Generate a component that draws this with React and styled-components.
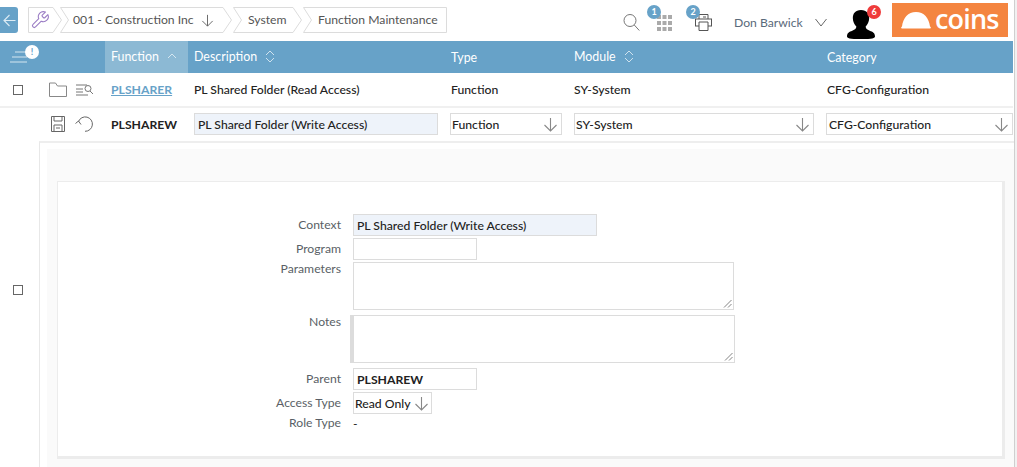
import React from "react";
import styled, { createGlobalStyle } from "styled-components";

const Global = createGlobalStyle`
  html, body { margin: 0; padding: 0; background: #fff; overflow: hidden; }
  body { font-family: Lato, "Liberation Sans", sans-serif; font-size: 12.2px; color: #222; }
  * { box-sizing: border-box; }
`;

const Shell = styled.div`width: 1017px; height: 467px; overflow: hidden; display: flex;`;
const Page = styled.div`width: 1014px; height: 467px; display: flex; flex-direction: column; flex: none;`;
const ScrollStrip = styled.div`flex: 1; background: #f1f1f1; border-left: 1px solid #cfcfcf;`;

const TopBar = styled.header`height: 41px; display: flex; align-items: flex-start; padding: 7px 6px 0 0; flex: none;`;
const BackButton = styled.button`
  width: 18px; height: 26px; border: 0; padding: 0; background: #67a2c8; border-radius: 0 3px 3px 0; flex: none;
  display: flex; align-items: center; justify-content: center;
`;
const Crumbs = styled.nav`display: flex; margin: 0 0 0 10px; height: 26px;`;
const Crumb = styled.div`
  position: relative; height: 26px; width: ${p => p.$w}px; margin-left: ${p => p.$ml ?? 0}px;
  display: flex; align-items: center; padding-left: ${p => p.$pad}px; color: #555; white-space: nowrap;
  gap: ${p => p.$gap ?? 0}px;
  & > svg.bg { position: absolute; inset: 0; }
  & > span, & > svg.ic { position: relative; }
`;
const CrumbText = styled.span`padding-bottom: 1px;`;
const Right = styled.div`margin-left: auto; display: flex; align-items: flex-start; height: 34px; margin-top: -4px;`;
const IconSlot = styled.div`position: relative; width: ${p => p.$w}px; height: 34px; flex: none;`;
const Count = styled.span`
  position: absolute; left: ${p => p.$l}px; top: ${p => p.$t}px; width: ${p => p.$s || 14}px; height: ${p => p.$s || 14}px; border-radius: 50%;
  background: ${p => p.$c || "#67a2c8"}; color: ${p => p.$fg || "#fff"}; font-size: 9px; font-weight: 700; line-height: ${p => p.$s || 14}px; text-align: center;
`;
const SlotIcon = styled.svg`position: absolute; left: ${p => p.$l}px; top: ${p => p.$t}px;`;
const User = styled.div`width: 113px; height: 34px; display: flex; align-items: center; gap: 12px; color: #5a6a7a; padding-top: 4px; flex: none;`;
const Logo = styled.div`
  width: 116px; height: 34px; background: #f48540; color: #fff; display: flex; align-items: center; padding-left: 9px; flex: none;
`;
const LogoText = styled.span`font-family: "Open Sans", Lato, sans-serif; font-size: 27px; font-weight: 600; line-height: 28px; margin-left: 4px; letter-spacing: -0.8px; padding-bottom: 3px;`;

const Grid = styled.div`
  display: grid; width: 1013px; flex: none;
  grid-template-columns: 39px 66px 83px 257px 123px 253px 192px;
`;
const HeadRow = styled(Grid)`height: 32px; background: #67a2c8; color: #fff; align-items: stretch;`;
const HeadCell = styled.div`
  display: flex; align-items: center; gap: 8px; padding-left: ${p => p.$pad ?? 6}px; padding-bottom: ${p => p.$sort ? 2 : 0}px;
  background: ${p => p.$active ? "#8cb9d4" : "transparent"}; position: relative; font-size: 12.4px;
`;
const Row = styled(Grid)`
  height: ${p => p.$h}px; border-bottom: ${p => p.$line ? "2px solid #f0f0f0" : "0"}; align-items: center;
  padding-bottom: ${p => p.$pb ?? 0}px;
`;
const Cell = styled.div`
  display: flex; align-items: center; padding-left: ${p => p.$pad ?? 6}px; gap: ${p => p.$gap ?? 0}px; color: #222; white-space: nowrap; min-width: 0;
  font-weight: ${p => p.$b ? 700 : 500};
`;
const CheckBox = styled.span`
  display: block; width: 10px; height: 10px; border: 1px solid #666; background: #fff; flex: none;
`;
const CheckCell = styled.div`display: flex; justify-content: flex-start; padding-left: 13px;`;
const FnLink = styled.a`color: #67a2c8; text-decoration: underline; font-weight: 700;`;
const Input = styled.div`
  display: flex; align-items: center; justify-content: space-between; height: 22px; width: ${p => p.$w}px; border: 1px solid #dcdcdc;
  background: ${p => p.$fill ? "#eef3fa" : "#fff"}; padding: 0 ${p => p.$pr ?? 3}px 0 ${p => p.$pl ?? 3}px; color: #222;
  font-weight: ${p => p.$b ? 700 : 500}; white-space: nowrap; flex: none;
`;

const Detail = styled.div`display: flex; flex: 1; min-height: 0; width: 1014px;`;
const DetailCheck = styled.div`width: 39px; display: flex; align-items: center; padding: 0 0 28px 13px; flex: none;`;
const Outer = styled.section`
  flex: 1; border-left: 1px solid #e8e8e8; border-top: 2px solid #eeeeee; padding: 6px 0 0 7px; display: flex;
`;
const Tint = styled.div`flex: 1; background: #fafafa; padding: 32px 9px 0 10px; display: flex;`;
const Card = styled.div`
  flex: 1; height: 278px; background: #fff; border: 1px solid #ececec; border-bottom-width: 3px; border-right-width: 3px;
  padding: 32px 0 0 0; display: flex; flex-direction: column;
`;
const Field = styled.div`display: flex; align-items: ${p => p.$top ? "flex-start" : "center"}; margin-bottom: ${p => p.$mb ?? 2}px; min-height: ${p => p.$h}px;`;
const Label = styled.label`
  width: ${p => p.$w ?? 295}px; text-align: right; color: #5a5f66; flex: none; padding-right: ${p => p.$pr ?? 12}px; line-height: 16px;
  margin-top: ${p => p.$mt ?? 0}px;
`;
const TextBox = styled.div`
  position: relative; width: ${p => p.$w}px; height: ${p => p.$h}px; border: 1px solid #dcdcdc; background: #fff;
  border-left-width: ${p => p.$thick ? 4 : 1}px;
`;
const Grip = styled.svg`position: absolute; right: 1px; bottom: 1px;`;

const Arrow = ({ c = "#888", size = 15 }) => (
  <svg className="ic" width={size} height={size} viewBox="0 0 15 15" fill="none" stroke={c} strokeWidth="1.1"><path d="M7.5 1v13M1.5 8l6 6 6-6" /></svg>
);
const UpDown = () => (
  <svg width="10" height="13" viewBox="0 0 10 13" fill="none" stroke="#cfe2ee" strokeWidth="1"><path d="M1 5l4-4 4 4M1 8l4 4 4-4" /></svg>
);
const CrumbBg = ({ w, first }) => (
  <svg className="bg" width={w} height="26" viewBox={`0 0 ${w} 26`} fill="#fff" stroke="#dcdcdc">
    {first ? <path d={`M.5.5H${w - 9}L${w - .5} 13 ${w - 9} 25.500H.5Z`} /> : <path d={`M.5.5H${w - 9}L${w - .5} 13 ${w - 9} 25.500H.5L8.500 13Z`} />}
  </svg>
);
const GripIcon = () => (
  <Grip width="9" height="9" viewBox="0 0 9 9" stroke="#666" strokeWidth="0.8"><path d="M1 8.500L8.500 1M5 8.500L8.500 5" /></Grip>
);

export default function App() {
  return (
    <Shell>
      <Global />
      <Page>
        <TopBar>
          <BackButton aria-label="Back">
            <svg width="13" height="13" viewBox="0 0 13 13" fill="none" stroke="#dcebf4" strokeWidth="1.1"><path d="M12.500 6.500H1M6.500 1L1 6.500 6.500 12" /></svg>
          </BackButton>
          <Crumbs>
            <Crumb $w={34} $pad={2}>
              <CrumbBg w={34} first />
              <svg className="ic" width="20" height="20" viewBox="0 0 24 24" fill="none" stroke="#9a7cc4" strokeWidth="1.3" strokeLinejoin="round"><path d="M14.700 6.300a1 1 0 0 0 0 1.400l1.600 1.600a1 1 0 0 0 1.400 0l3.770-3.770a6 6 0 0 1-7.940 7.940l-6.910 6.910a2.120 2.120 0 0 1-3-3l6.910-6.910a6 6 0 0 1 7.940-7.940l-3.760 3.760z" /></svg>
            </Crumb>
            <Crumb $w={172} $pad={13} $ml={-2} $gap={7}>
              <CrumbBg w={172} />
              <CrumbText>001 - Construction Inc</CrumbText><Arrow c="#666" size={13} />
            </Crumb>
            <Crumb $w={69} $pad={15} $ml={1}>
              <CrumbBg w={69} />
              <CrumbText>System</CrumbText>
            </Crumb>
            <Crumb $w={144} $pad={15} $ml={1}>
              <svg className="bg" width="144" height="26" viewBox="0 0 144 26" fill="#fff" stroke="#dcdcdc"><path d="M.5.5H143.500V25.500H.5L8.500 13Z" /></svg>
              <CrumbText>Function Maintenance</CrumbText>
            </Crumb>
          </Crumbs>
          <Right>
            <IconSlot $w={24}>
              <SlotIcon $l={0} $t={10} width="17" height="18" viewBox="0 0 17 18" fill="none" stroke="#777" strokeWidth="1"><circle cx="7" cy="7.500" r="6" /><path d="M11.300 12l5 5.500" /></SlotIcon>
            </IconSlot>
            <IconSlot $w={39}>
              <SlotIcon $l={10} $t={11} width="15" height="17" viewBox="0 0 15 17" fill="#aaa">
                {[0, 6, 12].flatMap(y => [0, 5.500, 11].map(x => <rect key={`${x}-${y}`} x={x} y={y + 1} width="4" height="4" />))}
              </SlotIcon>
              <Count $l={0} $t={2} $s={14}>1</Count>
            </IconSlot>
            <IconSlot $w={48}>
              <SlotIcon $l={9} $t={10} width="17" height="19" viewBox="0 0 17 19" fill="#fff" stroke="#555" strokeWidth="1"><path d="M4 6V1.500h9V6" /><rect x=".5" y="6" width="16" height="7" fill="none" /><path d="M4 9h9v8.500H4z" /><path d="M8 4h3" /></SlotIcon>
              <Count $l={0} $t={2} $s={14}>2</Count>
            </IconSlot>
            <User>
              <span>Don Barwick</span>
              <svg width="12" height="9" viewBox="0 0 12 9" fill="none" stroke="#666" strokeWidth="1"><path d="M.5 1L6 8l5.500-7" /></svg>
            </User>
            <IconSlot $w={45}>
              <SlotIcon $l={0} $t={7} width="28" height="29" viewBox="0 0 24 28" fill="#000" preserveAspectRatio="none"><path d="M12 0c5 0 7 3.500 7 8 0 3.500-1.500 6-3 8 0 2 1 3 3.500 4 2.500 1 4.500 2 4.500 5.500 0 1.500-2 2.500-12 2.500S0 27 0 25.500C0 22 2 21 4.500 20 7 19 8 18 8 16c-1.500-2-3-4.500-3-8 0-4.500 2-8 7-8z" /></SlotIcon>
              <Count $l={20} $t={2} $s={14} $c="#ef3b3b">6</Count>
            </IconSlot>
            <Logo>
              <svg width="30" height="18" viewBox="0 0 30 18" fill="#fff"><path d="M1 17.500c-1.300 0-1-1.500 0-2C2 7 7 1 15 1s13 6 14 14.500c1 .5 1.300 2 0 2z" /></svg>
              <LogoText>coins</LogoText>
            </Logo>
          </Right>
        </TopBar>

        <HeadRow>
          <HeadCell $pad={10} style={{ gridColumn: "1 / span 2" }}>
            <svg width="17" height="12" viewBox="0 0 17 12" stroke="#d5e6f0" strokeWidth="1"><path d="M5 1h12M2 6h15M0 11h17" /></svg>
            <Count $l={25} $t={4} $s={14} $c="#fff" $fg="#67a2c8">!</Count>
          </HeadCell>
          <HeadCell $active $sort>Function
            <svg width="10" height="6" viewBox="0 0 10 6" fill="none" stroke="#d5e6f0" strokeWidth="1"><path d="M1 5l4-4 4 4" /></svg>
          </HeadCell>
          <HeadCell $sort>Description<UpDown /></HeadCell>
          <HeadCell>Type</HeadCell>
          <HeadCell $sort>Module<UpDown /></HeadCell>
          <HeadCell>Category</HeadCell>
        </HeadRow>

        <Row $h={35} $line>
          <CheckCell><CheckBox /></CheckCell>
          <Cell $pad={10} $gap={9}>
            <svg width="18" height="15" viewBox="0 0 18 15" fill="none" stroke="#888" strokeWidth="1"><path d="M.5 14.500V1h6l2 3h9v10.500z" /></svg>
            <svg width="18" height="12" viewBox="0 0 18 12" fill="none" stroke="#777" strokeWidth="1"><path d="M0 1h11M0 5h7M0 8h7M0 11h12" /><circle cx="12" cy="4.500" r="3" /><path d="M14 7l3 3" /></svg>
          </Cell>
          <Cell><FnLink>PLSHARER</FnLink></Cell>
          <Cell>PL Shared Folder (Read Access)</Cell>
          <Cell>Function</Cell>
          <Cell>SY-System</Cell>
          <Cell>CFG-Configuration</Cell>
        </Row>

        <Row $h={33} $pb={1}>
          <span />
          <Cell $pad={12} $gap={10}>
            <svg width="14" height="16" viewBox="0 0 14 16" fill="none" stroke="#666" strokeWidth="1"><path d="M.5.5h13v15H.5z" /><path d="M3 .5v4.500h8V.5M3 15.500V9h8v6.500M5 12h4" /></svg>
            <svg width="20" height="16" viewBox="0 0 20 16" fill="none" stroke="#666" strokeWidth="1"><path d="M3.500 5.500A7.200 7.200 0 1 1 10 15.300" /><path d="M.5 7.500l3-2.500 2.500 3.500" /></svg>
          </Cell>
          <Cell $b>PLSHAREW</Cell>
          <Cell><Input $w={244} $fill>PL Shared Folder (Write Access)</Input></Cell>
          <Cell $pad={5}><Input $w={112} $pl={1}>Function<Arrow /></Input></Cell>
          <Cell $pad={6}><Input $w={240} $pl={1}>SY-System<Arrow /></Input></Cell>
          <Cell $pad={5}><Input $w={187} $pl={2}>CFG-Configuration<Arrow /></Input></Cell>
        </Row>

        <Detail>
          <DetailCheck><CheckBox /></DetailCheck>
          <Outer>
            <Tint>
              <Card>
                <Field $h={22}><Label>Context</Label><Input $w={244} $fill>PL Shared Folder (Write Access)</Input></Field>
                <Field $h={22}><Label>Program</Label><TextBox $w={124} $h={22} /></Field>
                <Field $top $h={48} $mb={5}><Label $mt={-1}>Parameters</Label><TextBox $w={381} $h={48}><GripIcon /></TextBox></Field>
                <Field $top $h={48} $mb={5}><Label $w={292} $pr={9} $mt={-1}>Notes</Label><TextBox $w={385} $h={48} $thick><GripIcon /></TextBox></Field>
                <Field $h={22}><Label>Parent</Label><Input $w={124} $b>PLSHAREW</Input></Field>
                <Field $h={22} $mb={1}><Label>Access Type</Label><Input $w={79} $pl={1} $pr={2}>Read Only<Arrow /></Input></Field>
                <Field $h={16}><Label>Role Type</Label><span>-</span></Field>
              </Card>
            </Tint>
          </Outer>
        </Detail>
      </Page>
      <ScrollStrip />
    </Shell>
  );
}
